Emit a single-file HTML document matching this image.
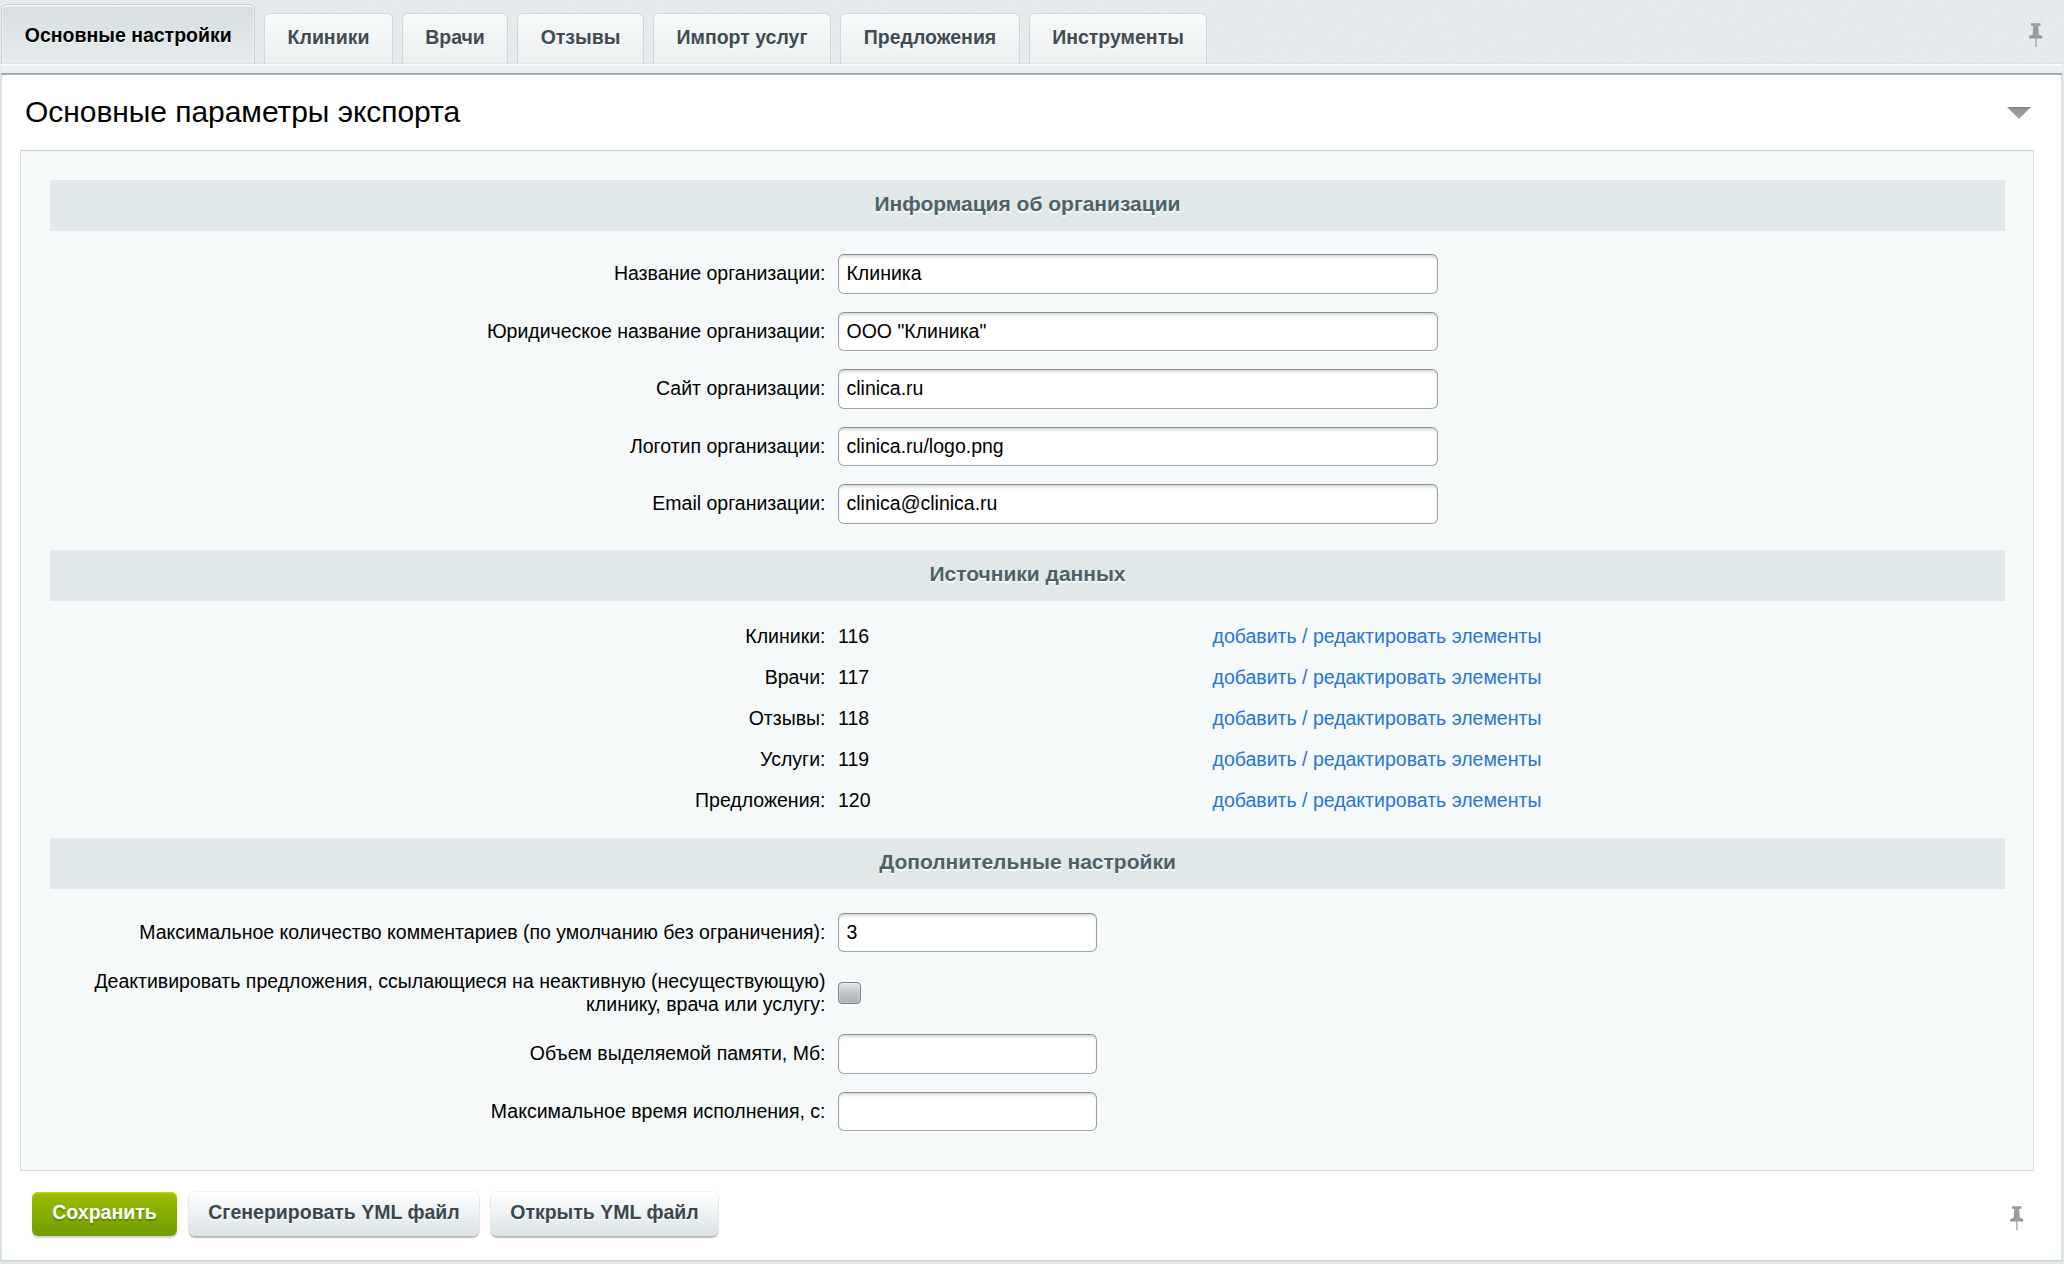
<!DOCTYPE html>
<html lang="ru">
<head>
<meta charset="utf-8">
<title>Основные настройки</title>
<style>
*{box-sizing:border-box;margin:0;padding:0}
html,body{width:2064px;height:1264px;overflow:hidden}
body{background:#e3eaec;font-family:"Liberation Sans",Arial,sans-serif;font-size:19.5px;color:#000;position:relative}
.abs{position:absolute}
/* tabs */
.tab{position:absolute;top:13px;height:51px;border:1px solid #ced7d8;border-bottom:none;border-radius:6px 6px 0 0;
 background:linear-gradient(#f8fafa,#eaeff0);box-shadow:inset 0 1px 0 #fff;font-weight:bold;font-size:19.5px;color:#3f4b54;
 text-shadow:0 1px 0 #fff;line-height:46px;text-align:center;white-space:nowrap}
.tab.act{top:4px;height:61px;background:linear-gradient(#d6dee1,#e6ecee);border-color:#c6cfd2;color:#000;line-height:60px;border-radius:6.5px 6.5px 0 0;box-shadow:inset 0 1.5px 0 rgba(255,255,255,.85),inset 1px 0 0 rgba(255,255,255,.5),inset -1px 0 0 rgba(255,255,255,.5)}
.strip{position:absolute;left:1px;top:63.5px;width:2061px;height:9.5px;background:#e8eff1;border-top:2px solid #f8fbfb;box-shadow:0 -1px 0 rgba(0,0,0,.03)}
.dline{position:absolute;left:1px;top:72.5px;width:2061px;height:2.5px;background:linear-gradient(#9ea7aa,#a9b2b5)}
.panel{position:absolute;left:0;top:75px;width:2063px;height:1186px;background:#fff;border-left:2px solid #d9e1e4;border-right:2px solid #d9e1e4;border-bottom:1px solid #c8d1d5;box-shadow:0 1px 0 rgba(0,0,0,.04)}
.title{position:absolute;left:25px;top:92px;letter-spacing:-.05px;font-size:30px;line-height:40px;color:#000;white-space:nowrap}
.box{position:absolute;left:20px;top:150px;width:2014px;height:1021px;background:#f5f9f9;border:1px solid;border-color:#c3cdd2 #dae2e6 #d3dde1 #dae2e6}
.hd{position:absolute;left:50px;width:1955px;height:51px;background:#e0e8ea;text-align:center;font-weight:bold;font-size:21px;color:#4b6267;text-shadow:0 1.5px 0 #fff;line-height:48px}
.lbl{position:absolute;right:1238.5px;white-space:nowrap;text-align:right;line-height:24px}
.inp{position:absolute;left:838px;height:40px;background:#fff;border:1px solid;border-color:#87919c #959ea9 #9ea7b1 #959ea9;border-radius:6px;box-shadow:0 1px 0 0 rgba(255,255,255,.3),inset 0 3px 3px -1.5px rgba(180,188,191,.7);padding-left:7.5px;line-height:36px;font-size:19.5px}
.val{position:absolute;left:838px;white-space:nowrap;line-height:24px}
.lnk{position:absolute;left:1212.5px;white-space:nowrap;line-height:24px;color:#2675d7}
.btn{position:absolute;top:1192px;height:43.5px;border-radius:6px;font-weight:bold;font-size:19.5px;line-height:40px;text-align:center;white-space:nowrap;
 background:linear-gradient(#fff,#d9e3e7);color:#3b4750;text-shadow:0 1px 0 #fff;box-shadow:0 0 1.5px rgba(0,0,0,.25),0 1.5px 1.5px rgba(0,0,0,.26),inset 0 1.5px #fff}
.btn.save{background:linear-gradient(#9abe02,#719c00);color:#fff;text-shadow:0 1.5px 1px #5f8400;box-shadow:0 1.5px 1.5px rgba(0,0,0,.18),inset 0 1.5px 0 #bfd600}
</style>
</head>
<body>
<svg class="abs" style="left:0;top:0" width="2064" height="76"><filter id="nz" x="0" y="0" width="100%" height="100%"><feTurbulence type="fractalNoise" baseFrequency=".4" numOctaves="2" seed="7" result="t"/><feColorMatrix type="matrix" values="0 0 0 0 1  0 0 0 0 1  0 0 0 0 1  .55 0 0 0 -.22"/></filter><rect width="2064" height="76" fill="#fff" filter="url(#nz)"/></svg>
<div class="tab act" style="left:1px;width:253.5px;padding-left:1px">Основные настройки</div>
<div class="tab" style="left:264px;width:129px">Клиники</div>
<div class="tab" style="left:402px;width:106px">Врачи</div>
<div class="tab" style="left:517px;width:127px">Отзывы</div>
<div class="tab" style="left:653px;width:178px">Импорт услуг</div>
<div class="tab" style="left:840px;width:180px">Предложения</div>
<div class="tab" style="left:1029px;width:178px">Инструменты</div>
<svg class="abs" style="left:2026px;top:22px" width="20" height="27" viewBox="0 0 20 27"><defs><linearGradient id="pg" x1="0" y1="0" x2="1" y2="0"><stop offset="0" stop-color="#868e93"/><stop offset=".55" stop-color="#9aa2a6"/><stop offset="1" stop-color="#868e93"/></linearGradient><linearGradient id="tg" x1="0" y1="0" x2="0" y2="1"><stop offset="0" stop-color="#787f84"/><stop offset=".25" stop-color="#8f979b"/><stop offset="1" stop-color="#a0a7ab"/></linearGradient></defs><path d="M5 1.3H14.5V3.7H12.2L12.8 13.1C14.6 13.3 16.2 14 16.2 15.1V16.5H10.6V25H9.3V16.5H3.2V15.1C3.2 14 4.8 13.3 6.6 13.1L7.3 3.7H5Z" fill="url(#pg)"/></svg>
<div class="strip"></div>
<div class="dline"></div>
<div class="panel"></div>
<div class="title">Основные параметры экспорта</div>
<svg class="abs" style="left:2007px;top:107px" width="24" height="12" viewBox="0 0 24 12"><path d="M0 0h24L12 12z" fill="url(#tg)"/></svg>
<div class="box"></div>

<div class="hd" style="top:180px">Информация об организации</div>
<div class="lbl" style="top:261px">Название организации:</div><div class="inp" style="top:254px;width:600px">Клиника</div>
<div class="lbl" style="top:319px">Юридическое название организации:</div><div class="inp" style="top:312px;width:600px;height:39px">ООО "Клиника"</div>
<div class="lbl" style="top:376px">Сайт организации:</div><div class="inp" style="top:369px;width:600px">clinica.ru</div>
<div class="lbl" style="top:434px">Логотип организации:</div><div class="inp" style="top:427px;width:600px;height:39px">clinica.ru/logo.png</div>
<div class="lbl" style="top:491px">Email организации:</div><div class="inp" style="top:484px;width:600px">clinica@clinica.ru</div>

<div class="hd" style="top:550px">Источники данных</div>
<div class="lbl" style="top:623.5px">Клиники:</div><div class="val" style="top:623.5px">116</div><div class="lnk" style="top:623.5px">добавить / редактировать элементы</div>
<div class="lbl" style="top:664.5px">Врачи:</div><div class="val" style="top:664.5px">117</div><div class="lnk" style="top:664.5px">добавить / редактировать элементы</div>
<div class="lbl" style="top:705.5px">Отзывы:</div><div class="val" style="top:705.5px">118</div><div class="lnk" style="top:705.5px">добавить / редактировать элементы</div>
<div class="lbl" style="top:746.5px">Услуги:</div><div class="val" style="top:746.5px">119</div><div class="lnk" style="top:746.5px">добавить / редактировать элементы</div>
<div class="lbl" style="top:787.5px">Предложения:</div><div class="val" style="top:787.5px">120</div><div class="lnk" style="top:787.5px">добавить / редактировать элементы</div>

<div class="hd" style="top:838px">Дополнительные настройки</div>
<div class="lbl" style="top:920px">Максимальное количество комментариев (по умолчанию без ограничения):</div><div class="inp" style="top:913px;width:259px;height:39px">3</div>
<div class="lbl" style="top:970px;line-height:23px">Деактивировать предложения, ссылающиеся на неактивную (несуществующую)<br>клинику, врача или услугу:</div>
<div class="abs" style="left:838px;top:982px;width:22.5px;height:22px;border:1.5px solid #747c83;border-radius:4px;background:linear-gradient(#e4e7e9,#c3c8cc 45%,#a9afb4);box-shadow:0 0 0 1px rgba(255,255,255,.75),inset 0 0 0 1px rgba(255,255,255,.3)"></div>
<div class="lbl" style="top:1041px">Объем выделяемой памяти, Мб:</div><div class="inp" style="top:1034px;width:259px"></div>
<div class="lbl" style="top:1099px">Максимальное время исполнения, с:</div><div class="inp" style="top:1092px;width:259px;height:39px"></div>

<div class="btn save" style="left:32px;width:145px">Сохранить</div>
<div class="btn" style="left:189px;width:290px">Сгенерировать YML файл</div>
<div class="btn" style="left:491px;width:227px">Открыть YML файл</div>
<svg class="abs" style="left:2007px;top:1204.5px" width="20" height="27" viewBox="0 0 20 27"><path d="M5 1.3H14.5V3.7H12.2L12.8 13.1C14.6 13.3 16.2 14 16.2 15.1V16.5H10.6V25H9.3V16.5H3.2V15.1C3.2 14 4.8 13.3 6.6 13.1L7.3 3.7H5Z" fill="url(#pg)"/></svg>
</body>
</html>
